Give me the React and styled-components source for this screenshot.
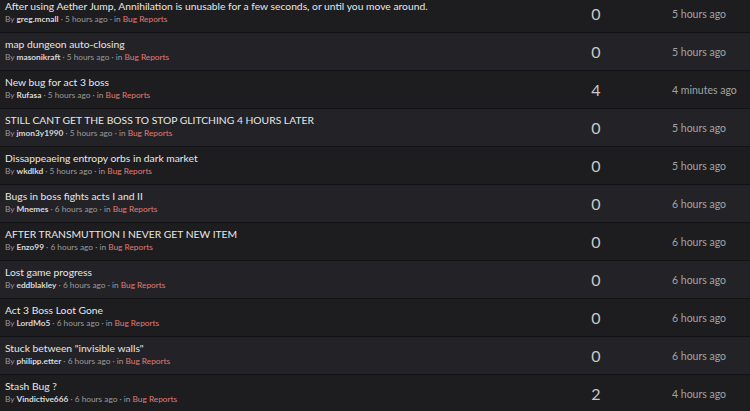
import React from 'react'
import styled, { createGlobalStyle } from 'styled-components'

const threads = [
  { title: 'After using Aether Jump, Annihilation is unusable for a few seconds, or until you move around.', by: 'greg.mcnall', ago: '5 hours ago', replies: 0, last: '5 hours ago' },
  { title: 'map dungeon auto-closing', by: 'masonikraft', ago: '5 hours ago', replies: 0, last: '5 hours ago' },
  { title: 'New bug for act 3 boss', by: 'Rufasa', ago: '5 hours ago', replies: 4, last: '4 minutes ago' },
  { title: 'STILL CANT GET THE BOSS TO STOP GLITCHING 4 HOURS LATER', by: 'jmon3y1990', ago: '5 hours ago', replies: 0, last: '5 hours ago' },
  { title: 'Dissappeaeing entropy orbs in dark market', by: 'wkdlkd', ago: '5 hours ago', replies: 0, last: '5 hours ago' },
  { title: 'Bugs in boss fights acts I and II', by: 'Mnemes', ago: '6 hours ago', replies: 0, last: '6 hours ago' },
  { title: 'AFTER TRANSMUTTION I NEVER GET NEW ITEM', by: 'Enzo99', ago: '6 hours ago', replies: 0, last: '6 hours ago' },
  { title: 'Lost game progress', by: 'eddblakley', ago: '6 hours ago', replies: 0, last: '6 hours ago' },
  { title: 'Act 3 Boss Loot Gone', by: 'LordMo5', ago: '6 hours ago', replies: 0, last: '6 hours ago' },
  { title: 'Stuck between "invisible walls"', by: 'philipp.etter', ago: '6 hours ago', replies: 0, last: '6 hours ago' },
  { title: 'Stash Bug ?', by: 'Vindictive666', ago: '6 hours ago', replies: 2, last: '4 hours ago' },
]

const GlobalStyle = createGlobalStyle`
  html, body {
    margin: 0;
    background: #1d1d20;
    overflow: hidden;
  }
  body {
    font-family: Lato, "Open Sans", "Liberation Sans", sans-serif;
  }
`

const List = styled.div`
  margin-top: -5px;
  width: 750px;
`

const Row = styled.div`
  display: grid;
  grid-template-columns: 1fr 80px 114px;
  align-items: center;
  height: 37px;
  border-bottom: 1px solid #131315;
  background: ${p => (p.alt ? '#232327' : '#1d1d20')};
`

const Info = styled.div`
  padding: 4px 0 0 5px;
  align-self: start;
  min-width: 0;
`

const Title = styled.div`
  color: #e6e6e6;
  font-size: 10.3px;
  line-height: 15px;
  white-space: nowrap;
`

const Meta = styled.div`
  color: #9a9a9a;
  font-size: 8.3px;
  line-height: 11px;
  white-space: nowrap;
`

const Author = styled.span`
  color: #d8d8d8;
  font-weight: 700;
`

const Forum = styled.span`
  color: #e07a73;
`

const Count = styled.div`
  text-align: center;
  color: #c9c9c9;
  font-size: 16px;
`

const Time = styled.div`
  padding-left: 36px;
  color: #a3a3a3;
  font-size: 10.5px;
  white-space: nowrap;
`

export default function App() {
  return (
    <>
      <GlobalStyle />
      <List>
        {threads.map((t, i) => (
          <Row key={i} alt={i % 2 === 1}>
            <Info>
              <Title>{t.title}</Title>
              <Meta>
                By <Author>{t.by}</Author> · {t.ago} · in <Forum>Bug Reports</Forum>
              </Meta>
            </Info>
            <Count>{t.replies}</Count>
            <Time>{t.last}</Time>
          </Row>
        ))}
      </List>
    </>
  )
}
